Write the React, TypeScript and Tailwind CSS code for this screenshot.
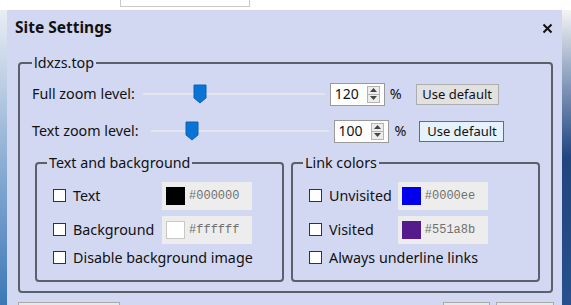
import React from "react";

const FONT = "font-['Noto_Sans','Liberation_Sans',sans-serif]";
const MONO = "font-['Liberation_Mono','DejaVu_Sans_Mono',monospace]";

function Slider({ thumb, width }: { thumb: string; width: string }) {
	return (
		<div className={`relative h-[22px] ${width} flex items-center`}>
			<div className="h-[2px] w-full bg-[#e4e6ef]" />
			<div className={`absolute top-[1px] ${thumb}`}>
				<svg width="14" height="20" viewBox="0 0 14 20">
					<path d="M1 1H13V14L7 19L1 14Z" fill="#0a74d6" stroke="#0a62b8" strokeWidth="1" />
				</svg>
			</div>
		</div>
	);
}

function NumberBox({ value }: { value: string }) {
	return (
		<div className="flex h-[23px] w-[55px] items-center justify-between border border-[#9a9a9a] bg-white pl-[4px] pr-[4px]">
			<span className="text-[14px] leading-none text-[#111]">{value}</span>
			<div className="flex h-[17px] w-[13px] flex-col border border-[#b4b4b4] bg-[#ececec]">
				<div className="flex flex-1 items-center justify-center">
					<svg width="7" height="4" viewBox="0 0 7 4">
						<path d="M0 4L3.5 0L7 4Z" fill="#444" />
					</svg>
				</div>
				<div className="h-px bg-[#b4b4b4]" />
				<div className="flex flex-1 items-center justify-center">
					<svg width="7" height="4" viewBox="0 0 7 4">
						<path d="M0 0L3.5 4L7 0Z" fill="#444" />
					</svg>
				</div>
			</div>
		</div>
	);
}

function Check() {
	return <div className="h-[13px] w-[13px] shrink-0 border border-[#333] bg-white" />;
}

function CheckLabel({ label }: { label: string }) {
	return (
		<div className="flex items-center gap-[7px]">
			<Check />
			<span className="whitespace-nowrap text-[14.3px] leading-none text-[#111]">{label}</span>
		</div>
	);
}

function ColorBox({ color, hex, light }: { color: string; hex: string; light?: boolean }) {
	return (
		<div className="flex h-[28px] w-[90px] items-center gap-[4px] bg-[#ededed] pl-[4px]">
			<div
				className={`h-[18px] w-[19px] ${light ? "border border-[#c8c8c8]" : ""}`}
				style={{ background: color }}
			/>
			<span className={`${MONO} text-[12px] leading-none text-[#707070]`}>{hex}</span>
		</div>
	);
}

function Group({ title, children }: { title: string; children: React.ReactNode }) {
	return (
		<fieldset className="rounded-[4px] border-2 border-[#5c606b] pb-[12px] pl-[16px]">
			<legend className="-ml-[6px] px-[2px] text-[14.3px] leading-[20px] text-[#111]">{title}</legend>
			{children}
		</fieldset>
	);
}

function UseDefault({ focused }: { focused?: boolean }) {
	return (
		<button
			className={`flex h-[21px] items-center justify-center whitespace-nowrap border text-[13px] leading-none text-[#111] ${
				focused ? "w-[85px] border-[#1a7fe0] bg-[#e5f1fb]" : "w-[83px] border-[#adadad] bg-[#e1e1e1]"
			}`}
		>
			Use default
		</button>
	);
}

export default function App() {
	return (
		<div className={`relative h-[305px] w-[571px] overflow-hidden bg-white ${FONT}`}>
			{/* page behind the dialog */}
			<div className="absolute left-[120px] top-[-10px] h-[17px] w-[130px] border border-[#c9c9c9] bg-white" />
			<div className="absolute left-0 top-[10px] h-[295px] w-[7px] bg-gradient-to-b from-[#e9edf3] via-[#8fb0d4] to-[#3b78b8]" />
			<div className="absolute right-0 top-[10px] h-[295px] w-[9px] bg-gradient-to-b from-[#f4f4f4] via-[#21457f] to-[#27508e]" />

			<div className="absolute left-[7px] top-[10px] h-[310px] w-[555px] bg-[#d3d8f2]">
				<div className="flex h-[43px] items-start justify-between pl-[8px] pr-[9px] pt-[6px]">
					<span className="text-[15.5px] font-bold leading-[22px] text-[#111]">Site Settings</span>
					<svg className="mt-[7px]" width="11" height="11" viewBox="0 0 11 11">
						<path d="M1.5 1.5L9.5 9.5M9.5 1.5L1.5 9.5" stroke="#111" strokeWidth="2" />
					</svg>
				</div>

				<fieldset className="ml-[11px] mr-[9px] rounded-[4px] border-2 border-[#5c606b] pb-[9px]">
					<legend className="ml-[12px] px-[2px] text-[14.3px] leading-[20px] text-[#111]">ldxzs.top</legend>

					<div className="mt-[9px] flex h-[24px] items-center pl-[12px]">
						<span className="text-[14.3px] leading-none text-[#111]">Full zoom level:</span>
						<div className="ml-[8px]">
							<Slider width="w-[182px]" thumb="left-[50px]" />
						</div>
						<div className="ml-[5px]">
							<NumberBox value="120" />
						</div>
						<span className="ml-[5px] text-[14.3px] leading-none text-[#111]">%</span>
						<div className="ml-[14px]">
							<UseDefault />
						</div>
					</div>

					<div className="mt-[13px] flex h-[24px] items-center pl-[12px]">
						<span className="text-[14.3px] leading-none text-[#111]">Text zoom level:</span>
						<div className="ml-[12px]">
							<Slider width="w-[178px]" thumb="left-[34px]" />
						</div>
						<div className="ml-[5px]">
							<NumberBox value="100" />
						</div>
						<span className="ml-[6px] text-[14.3px] leading-none text-[#111]">%</span>
						<div className="ml-[13px]">
							<UseDefault focused />
						</div>
					</div>

					<div className="ml-[15px] mr-[11px] mt-[10px] grid grid-cols-2 gap-[7px]">
						<Group title="Text and background">
							<div className="mt-[9px] grid grid-cols-[auto_auto] items-center justify-start gap-x-[7px] gap-y-[6px]">
								<CheckLabel label="Text" />
								<ColorBox color="#000000" hex="#000000" />
								<CheckLabel label="Background" />
								<ColorBox color="#ffffff" hex="#ffffff" light />
								<div className="col-span-2 -mt-[2px] flex h-[20px] items-center">
									<CheckLabel label="Disable background image" />
								</div>
							</div>
						</Group>
						<Group title="Link colors">
							<div className="mt-[9px] grid grid-cols-[auto_auto] items-center justify-start gap-x-[6px] gap-y-[6px]">
								<CheckLabel label="Unvisited" />
								<ColorBox color="#0000ee" hex="#0000ee" />
								<CheckLabel label="Visited" />
								<ColorBox color="#551a8b" hex="#551a8b" />
								<div className="col-span-2 -mt-[2px] flex h-[20px] items-center">
									<CheckLabel label="Always underline links" />
								</div>
							</div>
						</Group>
					</div>
				</fieldset>

				<div className="mt-[9px] flex items-start pl-[11px]">
					<div className="h-[20px] w-[102px] border border-[#a9a9a9] bg-[#e8e8e8]" />
					<div className="ml-auto h-[20px] w-[47px] border border-[#a9a9a9] bg-[#e8e8e8]" />
					<div className="ml-[6px] mr-[8px] h-[20px] w-[58px] border border-[#a9a9a9] bg-[#e8e8e8]" />
				</div>
			</div>
		</div>
	);
}
